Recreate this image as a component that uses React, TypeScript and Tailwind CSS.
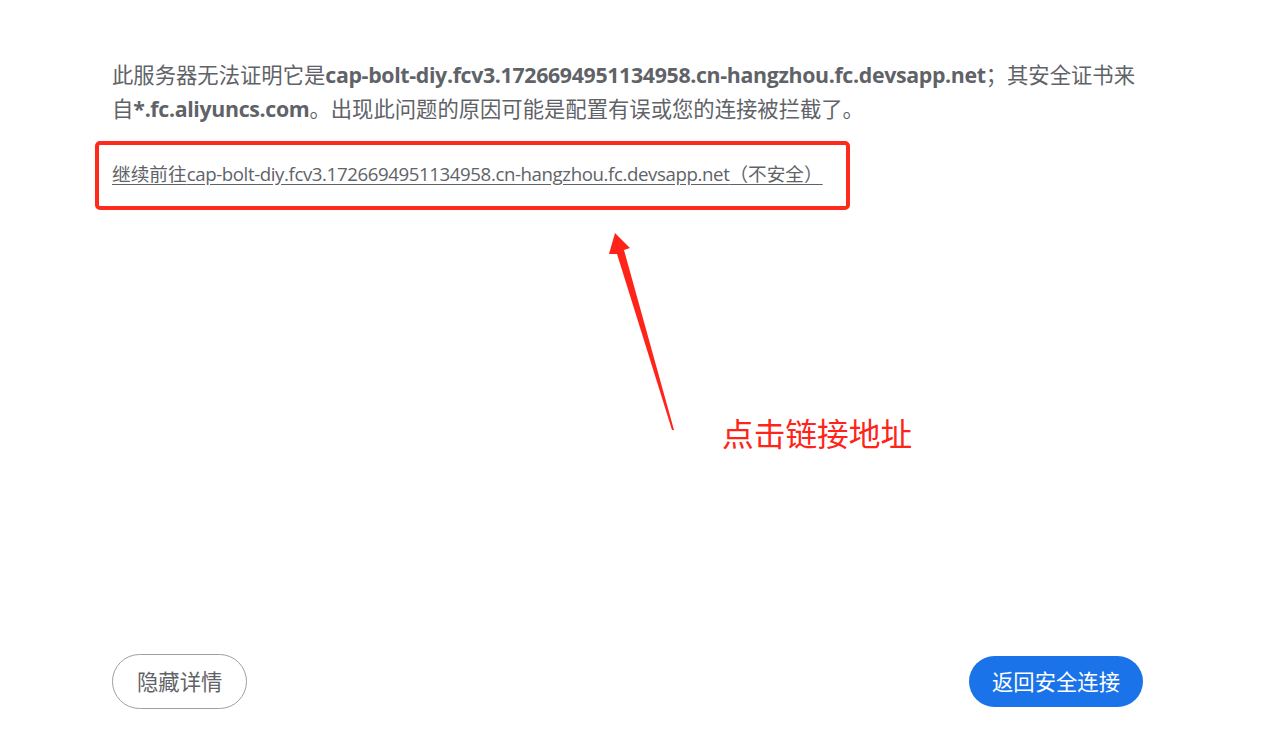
import React from "react";

export default function App() {
  const font = { fontFamily: '"Open Sans", "Noto Sans CJK SC", sans-serif' };
  return (
    <div className="relative w-[1276px] h-[733px] bg-white overflow-hidden" style={font}>
      <div className="flex flex-col h-full pl-[112px] pr-[133px] pt-[58px] pb-[24px]">
        <p className="text-[21.33px] leading-[34px] text-[#5f6368]">
          此服务器无法证明它是<span className="font-bold tracking-[-0.34px]">cap-bolt-diy.fcv3.1726694951134958.cn-hangzhou.fc.devsapp.net</span>；其安全证书来自<span className="font-bold tracking-[-0.34px]">*.fc.aliyuncs.com</span>。出现此问题的原因可能是配置有误或您的连接被拦截了。
        </p>
        <div className="mt-[15px] -ml-[17px] w-[755px] h-[69px] border-[4px] border-[#ff2a1a] rounded-[5px] flex items-center pl-[13px] pb-[4px]">
          <a className="text-[18.67px] text-[#5f6368] underline underline-offset-[3px]">
            继续前往<span className="tracking-[-0.4px]">cap-bolt-diy.fcv3.1726694951134958.cn-hangzhou.fc.devsapp.net</span>（不安全）
          </a>
        </div>
        <div className="flex-1" />
        <div className="flex items-center justify-between">
          <button className="h-[55px] px-[24px] rounded-full border border-[#9aa0a6] text-[21.33px] text-[#5f6368] bg-white">
            隐藏详情
          </button>
          <button className="h-[51px] px-[23px] rounded-full bg-[#1a73e8] text-[21.33px] text-white">
            返回安全连接
          </button>
        </div>
      </div>
      <svg className="absolute left-0 top-0" width="1276" height="733" viewBox="0 0 1276 733">
        <polygon points="615,233 630,248 624,250 674,430 672,430 617,254 609,254" fill="#ff2419" />
      </svg>
      <div className="absolute left-[722px] top-[412px] text-[31.7px] leading-[44px] text-[#ff2419]">
        点击链接地址
      </div>
    </div>
  );
}
